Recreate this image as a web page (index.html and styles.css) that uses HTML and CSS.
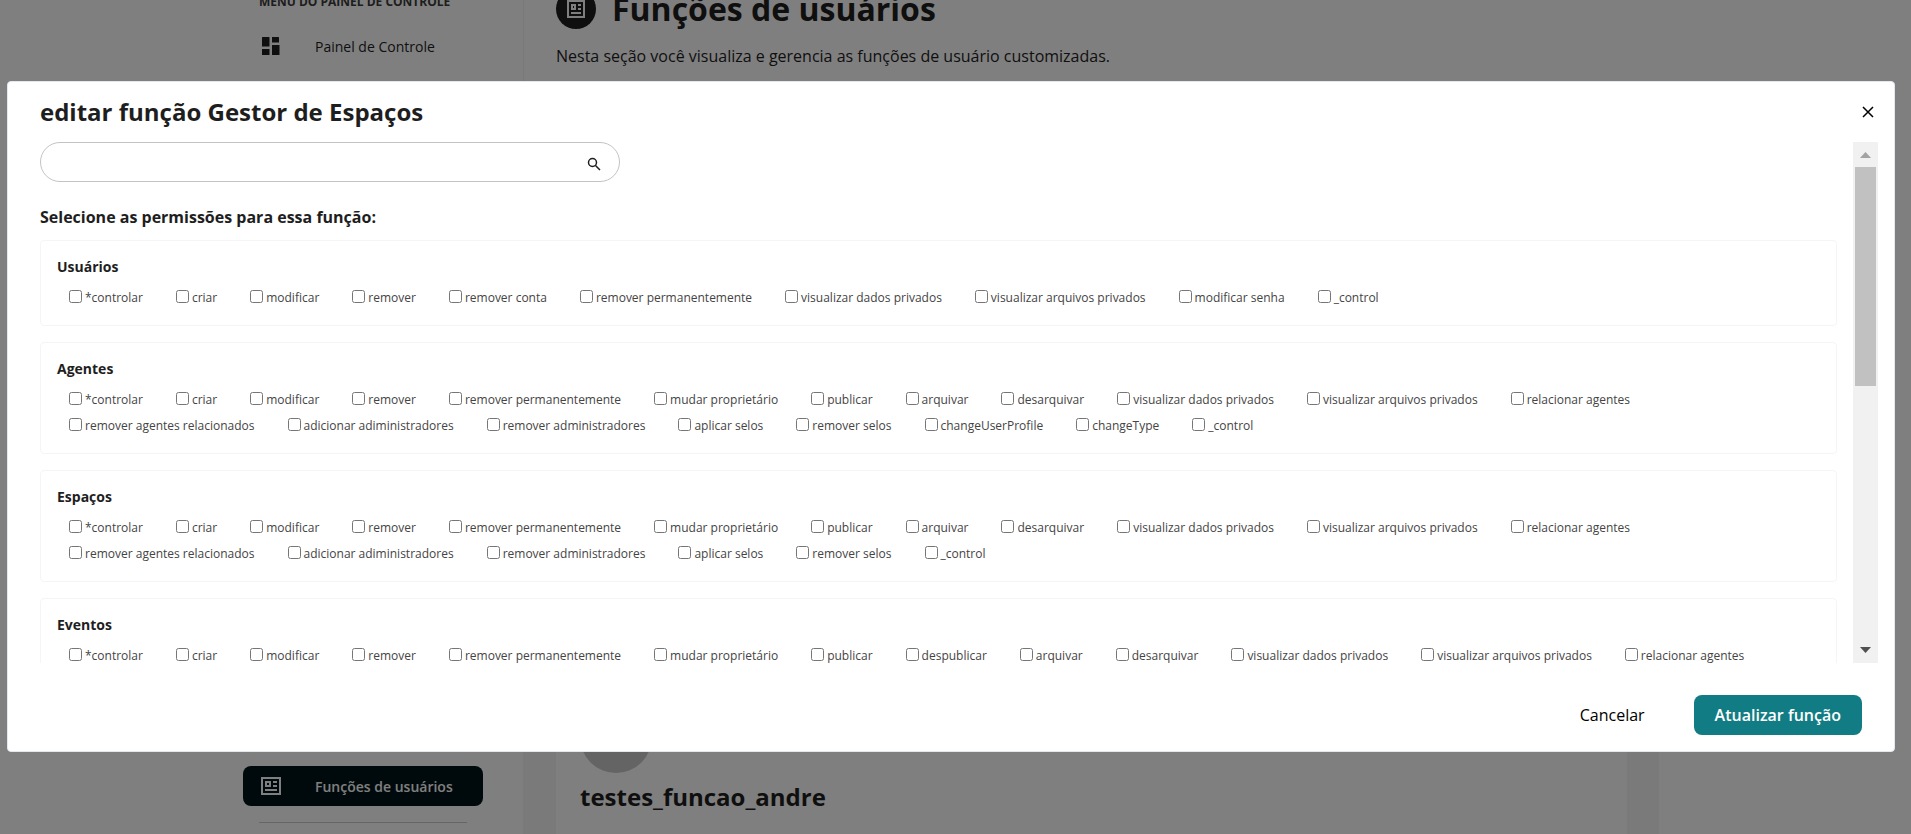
FILE: index.html
```html
<!DOCTYPE html>
<html lang="pt-BR">
<head>
<meta charset="utf-8">
<title>Funções de usuários</title>
<link rel="stylesheet" href="styles.css">
</head>
<body>
<div class="app">
  <aside class="sidebar">
    <div>
      <h3 class="sidebar-title">Menu do Painel de Controle</h3>
      <a class="nav-item" href="#">
        <svg class="nav-icon" viewBox="0 0 20 20" fill="currentColor"><path d="M1.500 1h6.500a.5.5 0 0 1 .5.500v9h-7.500v-9a.5.5 0 0 1 .5-.5zM11 1h6.500a.5.5 0 0 1 .5.500v5h-7V1zM1 13h7.500v6h-7a.5.5 0 0 1-.5-.5zM11 9h7.500v9.500a.5.5 0 0 1-.5.500H11z"/></svg>
        <span>Painel de Controle</span>
      </a>
    </div>
    <div>
      <a class="nav-item active" href="#">
        <svg class="nav-icon" viewBox="0 0 20 20" fill="none" stroke="currentColor" stroke-width="2"><path d="M1 2h18v16H1zM5 6h4v4H5zM12 6h4M12 10h4M4 14h12"/></svg>
        <span>Funções de usuários</span>
      </a>
      <hr class="nav-divider">
    </div>
  </aside>
  <main class="main">
    <header class="page-header">
      <div class="page-title">
        <span class="page-icon"><svg viewBox="0 0 20 20" fill="none" stroke="currentColor" stroke-width="2"><path d="M2 2h16v16H2zM6 6h3v4H6zM12 6h3M12 10h3M5 14h10"/></svg></span>
        <h1>Funções de usuários</h1>
      </div>
      <p class="page-text">Nesta seção você visualiza e gerencia as funções de usuário customizadas.</p>
    </header>
    <div class="columns">
      <article class="role-card">
        <span class="avatar"></span>
        <h2>testes_funcao_andre</h2>
      </article>
      <div class="side-card"></div>
    </div>
  </main>
</div>

<div class="overlay">
  <div class="modal" role="dialog" aria-modal="true" aria-labelledby="modal-title">
    <header class="modal-header">
      <h2 id="modal-title">editar função Gestor de Espaços</h2>
      <button class="close" type="button" aria-label="Fechar"><svg viewBox="0 0 12 12" fill="none" stroke="currentColor" stroke-width="1.500"><path d="M1 1l10 10M11 1L1 11"/></svg></button>
    </header>
    <div class="modal-body">
      <div class="content">
        <form class="search">
          <input type="text" aria-label="Pesquisar">
          <button type="button" aria-label="Pesquisar"><svg viewBox="0 0 14 14" fill="none" stroke="currentColor" stroke-width="1.500"><circle cx="5.500" cy="5.500" r="4"/><path d="M8.500 8.500L13 13"/></svg></button>
        </form>
        <p class="lead">Selecione as permissões para essa função:</p>
        <section class="card">
          <h4>Usuários</h4>
          <div class="perms">
            <label><input type="checkbox">*controlar</label>
            <label><input type="checkbox">criar</label>
            <label><input type="checkbox">modificar</label>
            <label><input type="checkbox">remover</label>
            <label><input type="checkbox">remover conta</label>
            <label><input type="checkbox">remover permanentemente</label>
            <label><input type="checkbox">visualizar dados privados</label>
            <label><input type="checkbox">visualizar arquivos privados</label>
            <label><input type="checkbox">modificar senha</label>
            <label><input type="checkbox">_control</label>
          </div>
        </section>
        <section class="card">
          <h4>Agentes</h4>
          <div class="perms">
            <label><input type="checkbox">*controlar</label>
            <label><input type="checkbox">criar</label>
            <label><input type="checkbox">modificar</label>
            <label><input type="checkbox">remover</label>
            <label><input type="checkbox">remover permanentemente</label>
            <label><input type="checkbox">mudar proprietário</label>
            <label><input type="checkbox">publicar</label>
            <label><input type="checkbox">arquivar</label>
            <label><input type="checkbox">desarquivar</label>
            <label><input type="checkbox">visualizar dados privados</label>
            <label><input type="checkbox">visualizar arquivos privados</label>
            <label><input type="checkbox">relacionar agentes</label>
            <label><input type="checkbox">remover agentes relacionados</label>
            <label><input type="checkbox">adicionar adiministradores</label>
            <label><input type="checkbox">remover administradores</label>
            <label><input type="checkbox">aplicar selos</label>
            <label><input type="checkbox">remover selos</label>
            <label><input type="checkbox">changeUserProfile</label>
            <label><input type="checkbox">changeType</label>
            <label><input type="checkbox">_control</label>
          </div>
        </section>
        <section class="card">
          <h4>Espaços</h4>
          <div class="perms">
            <label><input type="checkbox">*controlar</label>
            <label><input type="checkbox">criar</label>
            <label><input type="checkbox">modificar</label>
            <label><input type="checkbox">remover</label>
            <label><input type="checkbox">remover permanentemente</label>
            <label><input type="checkbox">mudar proprietário</label>
            <label><input type="checkbox">publicar</label>
            <label><input type="checkbox">arquivar</label>
            <label><input type="checkbox">desarquivar</label>
            <label><input type="checkbox">visualizar dados privados</label>
            <label><input type="checkbox">visualizar arquivos privados</label>
            <label><input type="checkbox">relacionar agentes</label>
            <label><input type="checkbox">remover agentes relacionados</label>
            <label><input type="checkbox">adicionar adiministradores</label>
            <label><input type="checkbox">remover administradores</label>
            <label><input type="checkbox">aplicar selos</label>
            <label><input type="checkbox">remover selos</label>
            <label><input type="checkbox">_control</label>
          </div>
        </section>
        <section class="card">
          <h4>Eventos</h4>
          <div class="perms">
            <label><input type="checkbox">*controlar</label>
            <label><input type="checkbox">criar</label>
            <label><input type="checkbox">modificar</label>
            <label><input type="checkbox">remover</label>
            <label><input type="checkbox">remover permanentemente</label>
            <label><input type="checkbox">mudar proprietário</label>
            <label><input type="checkbox">publicar</label>
            <label><input type="checkbox">despublicar</label>
            <label><input type="checkbox">arquivar</label>
            <label><input type="checkbox">desarquivar</label>
            <label><input type="checkbox">visualizar dados privados</label>
            <label><input type="checkbox">visualizar arquivos privados</label>
            <label><input type="checkbox">relacionar agentes</label>
          </div>
        </section>
      </div>
      <div class="scrollbar" aria-hidden="true">
        <svg class="arrow up" viewBox="0 0 25 25"><path d="M7 16h11l-5.500-6z"/></svg>
        <div class="track"><div class="thumb"></div></div>
        <svg class="arrow down" viewBox="0 0 25 25"><path d="M7 9h11l-5.500 6z"/></svg>
      </div>
    </div>
    <footer class="modal-footer">
      <button class="btn" type="button">Cancelar</button>
      <button class="btn primary" type="button">Atualizar função</button>
    </footer>
  </div>
</div>
</body>
</html>
```

FILE: styles.css
```css
* { box-sizing: border-box; }

body {
  margin: 0;
  height: 100vh;
  overflow: hidden;
  font-family: "Open Sans", "Noto Sans", sans-serif;
  font-size: 16px;
  color: #1e1e1e;
  background: #fff;
}

h1, h2, h3, h4, p { margin: 0; }
button { font: inherit; color: inherit; border: 0; background: none; padding: 0; cursor: pointer; }
svg { display: block; }

/* Page behind the dialog */
.app { display: flex; height: 100vh; overflow: hidden; }

.sidebar {
  flex: none;
  width: 524px;
  padding: 0 40px 11px 243px;
  border-right: 1px solid #f5f5f5;
  display: flex;
  flex-direction: column;
  justify-content: space-between;
}
.sidebar-title {
  margin-top: -8px;
  padding-left: 16px;
  color: #3c3c3c;
  font-size: 12px;
  line-height: 20px;
  font-weight: 700;
  text-transform: uppercase;
  white-space: nowrap;
}
.nav-item {
  display: flex;
  align-items: center;
  gap: 34px;
  height: 40px;
  margin-top: 14px;
  padding: 0 18px;
  border-radius: 8px;
  color: inherit;
  font-size: 14px;
  font-weight: 500;
  text-decoration: none;
}
.nav-item.active { background: #001317; color: #fff; font-weight: 600; }
.nav-icon { width: 20px; height: 20px; }
.nav-divider { margin: 16px 16px 0; border: 0; border-top: 1px solid #ccc; }

.main { flex: 1; min-width: 0; display: flex; flex-direction: column; }
.page-header { padding: 0 32px; height: 120px; margin-top: -12px; }
.page-title { display: flex; align-items: center; gap: 16px; height: 42px; }
.page-title h1 { font-size: 32px; line-height: 42px; font-weight: 700; }
.page-icon {
  display: flex;
  align-items: center;
  justify-content: center;
  width: 40px;
  height: 40px;
  border-radius: 50%;
  background: #1e1e1e;
  color: #fff;
}
.page-icon svg { width: 20px; height: 20px; }
.page-text { margin-top: 14px; line-height: 24px; font-weight: 400; }

.columns { flex: 1; display: flex; gap: 32px; padding-left: 32px; background: #f5f5f5; }
.role-card {
  flex: 1;
  display: flex;
  flex-direction: column;
  justify-content: flex-end;
  gap: 8px;
  padding: 0 24px 21px;
  background: #fff;
}
.avatar { width: 72px; height: 72px; border-radius: 50%; background: #c8c8c8; }
.role-card h2 { font-size: 24px; line-height: 32px; font-weight: 700; }
.side-card { flex: none; width: 252px; background: #fff; }

/* Dialog */
.overlay {
  position: fixed;
  inset: 0;
  display: flex;
  padding: 81px 16px 82px 7px;
  background: rgba(0, 0, 0, 0.5);
}
.modal {
  flex: 1;
  min-width: 0;
  display: flex;
  flex-direction: column;
  padding: 0 16px 16px 32px;
  border: 1px solid #e2e8f0;
  border-radius: 4px;
  background: #fff;
}
.modal-header {
  flex: none;
  display: flex;
  align-items: center;
  justify-content: space-between;
  height: 60px;
}
.modal-header h2 { font-size: 24px; line-height: 32px; font-weight: 700; }
.close { padding: 4px; color: #000; }
.close svg { width: 12px; height: 12px; }

.modal-body { flex: 1; min-height: 0; display: flex; gap: 16px; }
.content { flex: 1; min-width: 0; overflow: hidden; }

.search {
  display: flex;
  align-items: center;
  width: 580px;
  height: 40px;
  padding: 0 18px;
  border: 1px solid #c3c3c3;
  border-radius: 20px;
}
.search input { flex: 1; height: 32px; border: 0; outline: 0; background: none; font: inherit; }
.search svg { width: 14px; height: 14px; margin-top: 4px; }

.lead { margin: 24px 0 12px; line-height: 22px; font-weight: 700; }

.card {
  margin-bottom: 16px;
  padding: 16px 16px 12px;
  border: 1px solid #f5f5f5;
  border-radius: 4px;
}
.card h4 { font-size: 14px; line-height: 20px; font-weight: 700; }
.perms { display: flex; flex-wrap: wrap; padding: 7px 0 3px 8px; }
.perms label {
  display: flex;
  align-items: center;
  height: 26px;
  margin-right: 29px;
  color: #444;
  font-size: 12px;
  font-weight: 400;
  white-space: nowrap;
}
.perms input { width: 13px; height: 13px; margin: 0 3px 1px 4px; }

.scrollbar { flex: none; display: flex; flex-direction: column; width: 25px; background: #f1f1f1; }
.arrow { flex: none; width: 25px; height: 25px; }
.up { fill: #a3a3a3; }
.down { fill: #505050; }
.track { flex: 1; padding: 0 2px; }
.thumb { height: 219px; background: #c1c1c1; }

.modal-footer {
  flex: none;
  display: flex;
  justify-content: flex-end;
  gap: 28px;
  padding: 32px 16px 0 0;
}
.btn { height: 40px; padding: 0 21px; border-radius: 8px; color: #000; font-weight: 500; }
.primary { background: #117c83; color: #fff; font-weight: 600; }
```
